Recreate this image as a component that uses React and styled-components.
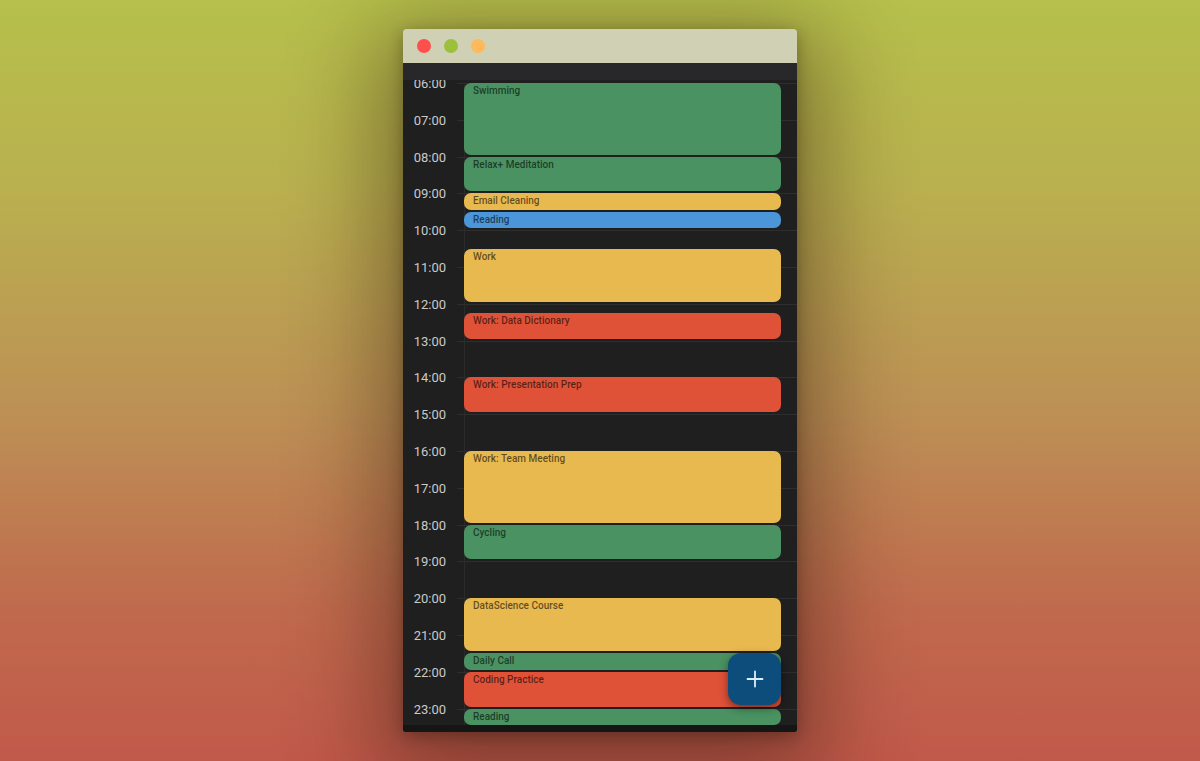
import styled, { createGlobalStyle } from "styled-components";

const HOUR = 36.8;
const FIRST_HOUR = 6;

const colors = {
  green: "#4a9261",
  yellow: "#e8b94f",
  red: "#df5238",
  blue: "#4b96d8",
};

const events = [
  { title: "Swimming", start: 6, end: 8, color: "green" },
  { title: "Relax+ Meditation", start: 8, end: 9, color: "green" },
  { title: "Email Cleaning", start: 9, end: 9.5, color: "yellow" },
  { title: "Reading", start: 9.5, end: 10, color: "blue" },
  { title: "Work", start: 10.5, end: 12, color: "yellow" },
  { title: "Work: Data Dictionary", start: 12.25, end: 13, color: "red" },
  { title: "Work: Presentation Prep", start: 14, end: 15, color: "red" },
  { title: "Work: Team Meeting", start: 16, end: 18, color: "yellow" },
  { title: "Cycling", start: 18, end: 19, color: "green" },
  { title: "DataScience Course", start: 20, end: 21.5, color: "yellow" },
  { title: "Daily Call", start: 21.5, end: 22, color: "green" },
  { title: "Coding Practice", start: 22, end: 23, color: "red" },
  { title: "Reading", start: 23, end: 23.5, color: "green" },
];

const GlobalStyle = createGlobalStyle`
  html, body {
    margin: 0;
    padding: 0;
  }
  body {
    font-family: Roboto, "Liberation Sans", sans-serif;
  }
`;

const Page = styled.div`
  height: 761px;
  overflow: hidden;
  display: flex;
  justify-content: center;
  align-items: flex-start;
  background: linear-gradient(
    180deg,
    #b6c04b 0%,
    #b9b04f 25%,
    #bd8f55 55%,
    #c06a4d 80%,
    #c1594a 100%
  );
`;

const Window = styled.div`
  margin-top: 29px;
  width: 394px;
  height: 703px;
  display: flex;
  flex-direction: column;
  border-radius: 4px 4px 2px 2px;
  overflow: hidden;
  position: relative;
  box-shadow: 0 24px 90px 24px rgba(40, 20, 10, 0.42),
    0 4px 16px rgba(0, 0, 0, 0.3);
`;

const TitleBar = styled.div`
  height: 34px;
  flex-shrink: 0;
  display: flex;
  align-items: center;
  gap: 13px;
  padding-left: 14px;
  background: #d0d0b4;
`;

const Light = styled.span`
  width: 14px;
  height: 14px;
  border-radius: 50%;
  background: ${({ $color }) => $color};
`;

const Header = styled.div`
  height: 17px;
  flex-shrink: 0;
  background: #28282a;
`;

const Scroller = styled.div`
  flex: 1;
  overflow: hidden;
  background: #1f1f1f;
`;

const Footer = styled.div`
  height: 7px;
  flex-shrink: 0;
  background: #151515;
`;

const Timeline = styled.div`
  position: relative;
  margin-top: 3px;
  height: ${(24 - FIRST_HOUR) * HOUR}px;
`;

const HourRow = styled.div`
  height: ${HOUR}px;
  display: grid;
  grid-template-columns: 54px 1fr;
`;

const HourLabel = styled.div`
  margin-top: -8px;
  height: 16px;
  line-height: 17px;
  padding-right: 11px;
  text-align: right;
  font-size: 13px;
  color: #cacaca;
`;

const Rule = styled.div`
  border-top: 1px solid #2e2e2e;
`;

const EventLayer = styled.div`
  position: absolute;
  top: 0;
  bottom: 0;
  left: 61px;
  right: 16px;
  border-left: 1px solid #2b2b2b;
`;

const Event = styled.div`
  position: absolute;
  left: -1px;
  right: 0;
  box-sizing: border-box;
  padding: 2px 9px 0;
  border-radius: 7px;
  background: ${({ $color }) => colors[$color]};
  font-size: 10px;
  font-weight: 500;
  line-height: 12px;
  color: rgba(0, 0, 0, 0.6);
  white-space: nowrap;
  overflow: hidden;
`;

const Fab = styled.button`
  position: absolute;
  right: 16px;
  bottom: 27px;
  width: 53px;
  height: 52px;
  border: none;
  border-radius: 13px;
  background: #0c4d7b;
  display: flex;
  align-items: center;
  justify-content: center;
  box-shadow: 0 3px 8px rgba(0, 0, 0, 0.45);
  cursor: pointer;
`;

const pad = (h) => String(h).padStart(2, "0") + ":00";

export default function App() {
  const hours = Array.from({ length: 24 - FIRST_HOUR }, (_, i) => FIRST_HOUR + i);

  return (
    <>
      <GlobalStyle />
      <Page>
        <Window>
          <TitleBar>
            <Light $color="#fe4f4f" />
            <Light $color="#9dc03b" />
            <Light $color="#feb95a" />
          </TitleBar>
          <Header />
          <Scroller>
            <Timeline>
              {hours.map((h) => (
                <HourRow key={h}>
                  <HourLabel>{pad(h)}</HourLabel>
                  <Rule />
                </HourRow>
              ))}
              <EventLayer>
                {events.map((ev, i) => (
                  <Event
                    key={i}
                    $color={ev.color}
                    style={{
                      top: (ev.start - FIRST_HOUR) * HOUR,
                      height: (ev.end - ev.start) * HOUR - 2,
                    }}
                  >
                    {ev.title}
                  </Event>
                ))}
              </EventLayer>
            </Timeline>
          </Scroller>
          <Footer />
          <Fab aria-label="Add event">
            <svg width="18" height="18" viewBox="0 0 18 18">
              <path
                d="M9 1.5v15M1.5 9h15"
                stroke="#dcefff"
                strokeWidth="1.8"
                strokeLinecap="round"
              />
            </svg>
          </Fab>
        </Window>
      </Page>
    </>
  );
}
